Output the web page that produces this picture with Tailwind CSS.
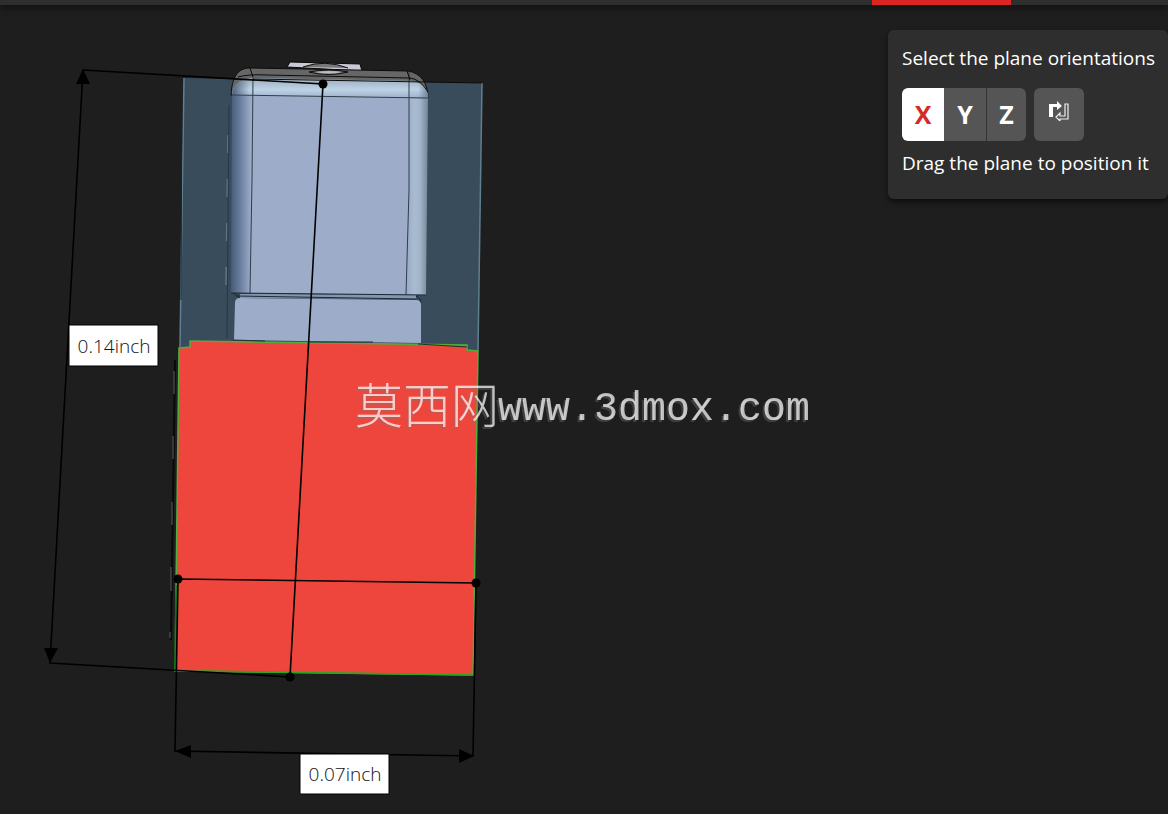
<!DOCTYPE html>
<html lang="en">

<head>
  <meta charset="UTF-8">
  <meta name="viewport" content="width=device-width, initial-scale=1.0">
  <title>Section view</title>
  <script src="https://cdn.jsdelivr.net/npm/@tailwindcss/browser@4"></script>
</head>

<body class="relative min-h-screen overflow-hidden bg-[#1e1e1e] font-['Open_Sans',sans-serif] text-white">
  <!-- 3D viewport -->
  <svg class="absolute inset-0 h-full w-full" viewBox="0 0 1168 814" preserveAspectRatio="xMinYMin meet" role="img" aria-label="Section view of the part">
    <defs>
      <linearGradient id="side" x1="0" x2="1" y1="0" y2="0">
        <stop offset="0" stop-color="#485b74" />
        <stop offset="0.04" stop-color="#64789a" />
        <stop offset="0.1" stop-color="#9aabc7" />
        <stop offset="0.11" stop-color="#9dadc9" />
        <stop offset="0.9" stop-color="#9dadc9" />
        <stop offset="0.93" stop-color="#a8bcd0" />
        <stop offset="0.96" stop-color="#a2b5c8" />
        <stop offset="1" stop-color="#71869a" />
      </linearGradient>
      <linearGradient id="fillet" x1="0" x2="0" y1="0" y2="1">
        <stop offset="0" stop-color="#9aacbd" />
        <stop offset="0.55" stop-color="#bdd3e5" />
        <stop offset="1" stop-color="#9dadc9" />
      </linearGradient>
      <linearGradient id="filletEdge" x1="0" x2="1" y1="0" y2="0">
        <stop offset="0" stop-color="#4c6078" />
        <stop offset="0.09" stop-color="#4c6078" stop-opacity="0" />
        <stop offset="0.95" stop-color="#71869a" stop-opacity="0" />
        <stop offset="1" stop-color="#71869a" />
      </linearGradient>
      <filter id="relief" x="-5%" y="-20%" width="110%" height="140%">
        <feDropShadow dx="-2" dy="2" stdDeviation="0" flood-color="#777" flood-opacity="0.5" />
      </filter>
    </defs>

    <!-- cutting plane -->
    <path fill="#394c5c" d="M184 78 482 83 478 352 180 348z" />
    <path fill="none" stroke="#607f90" stroke-width="1.5" d="M184 78 180 347M482 83 478 351" />
    <path fill="none" stroke="#182530" d="M182 80 181 300" />

    <!-- connector body -->
    <path fill="#c9c9d6" stroke="#080808" d="M287 67 290 62 360 64 362 71z" />
    <path fill="#666" stroke="#0c0c0c" d="M231 95C232 78 237 68 250 68L408 71C420 73 428 82 428 98z" />
    <path fill="#777" stroke="#0c0c0c" d="M303 67Q325 59 348 68M309 72Q328 68 348 72Q328 77 309 72" />
    <path fill="#bbb" d="M315 72Q330 70 342 72Q330 75 315 72" />
    <path fill="url(#side)" d="M232 94 428 97 426 295 231 293z" />
    <path fill="url(#fillet)" d="M232 95C233 84 240 80 252 78L412 81C424 83 428 89 428 99z" />
    <path fill="url(#filletEdge)" d="M232 95C233 84 240 80 252 78L412 81C424 83 428 89 428 99z" />
    <path fill="none" stroke="#303d4a" d="M232 95 428 98M253 77 252 180 250 293M409 72 409 190 406 295" />
    <path fill="none" stroke="#0c0c0c" d="M238 77Q248 74 267 75L410 78Q420 79 428 92M250 68 253 77M407 71 410 80M253 79 482 83" />
    <path fill="#8596b0" d="M240 294 416 295V299L240 298z" />
    <path fill="none" stroke="#1d2935" d="M231 293 426 295M236 296 416 299M233 293Q239 296 240 299M416 296Q421 298 421 303" />
    <path fill="none" stroke="#607785" stroke-width="1.5" stroke-dasharray="18 26" d="M228 135 226 285" />
    <path fill="none" stroke="#263747" d="M229 105 227 338" />
    <path fill="#9dadc9" d="M235 303Q235 298 240 298L416 300Q421 300 421 305V343L234 340z" />

    <!-- section cap -->
    <path fill="#ee463c" stroke="#4fae3e" stroke-width="1.5" d="M179 348 190 347V341L467 345V350L478 351 473 675 175 671z" />
    <path fill="none" stroke="#1d332b" d="M233 340 265 341M308 342 373 342M418 344 467 347" />
    <path fill="none" stroke="#090909" stroke-width="2" d="M175 360 171 640M177 585 175 671" />
    <path fill="none" stroke="#454545" stroke-width="1.5" d="M174 371V394M173 436V459M172 502V525M171 567V591M170 632V638" />
    <path fill="none" stroke="#178018" stroke-width="2" d="M177 585 175 671" />
    <path fill="none" stroke="#2fa020" stroke-width="1.5" d="M200 671 473 675" />

    <!-- dimensions -->
    <g fill="none" stroke="#000" stroke-width="1.6">
      <path d="M83 70 323 84 290 677 50 663z" />
      <path d="M178 579 476 583 473 756 175 751z" />
    </g>
    <path d="M83 69 90 84 76 84zM50 663 44 648 58 648zM175 751 191 745 191 758zM474 756 459 749 459 763z" />
    <circle cx="323" cy="84" r="4.5" />
    <circle cx="290" cy="677" r="4.5" />
    <circle cx="178" cy="579" r="4.5" />
    <circle cx="476" cy="583" r="4.5" />

    <g fill="#fff" stroke="#000">
      <path d="M69 325H158V366H69zM300 754H389V794H300z" />
    </g>
    <g class="text-[19px] font-light" fill="#111" text-anchor="middle">
      <text x="114" y="353">0.14inch</text>
      <text x="345" y="781">0.07inch</text>
    </g>

    <!-- watermark -->
    <g filter="url(#relief)" fill="#fff" fill-opacity="0.72">
      <text class="font-['Noto_Sans_CJK_SC',sans-serif] text-[48px] font-light" x="355" y="423">莫西网</text>
      <text class="font-['Liberation_Mono',monospace] text-[40px]" x="498" y="420">www.3dmox.com</text>
    </g>
  </svg>

  <header class="relative flex h-[5px] justify-end bg-[#2e2e2e] pr-[157px] shadow-md shadow-black/60">
    <div class="w-[139px] bg-[#dc2626]"></div>
  </header>

  <aside class="relative mt-[25px] ml-auto w-[280px] rounded-md bg-[#2e2e2e] px-[14px] pt-4 pb-6 shadow-md shadow-black/50">
    <p class="text-[19px] leading-6 whitespace-nowrap">Select the plane orientations</p>
    <div class="mt-[18px] mb-[10px] flex h-[53px] gap-2">
      <div class="flex overflow-hidden rounded-md text-[25px] font-bold" role="group" aria-label="Plane axis">
        <button type="button" aria-pressed="true" class="w-[42px] bg-white text-[#d52b27]">X</button>
        <button type="button" aria-pressed="false" class="w-[42px] bg-[#555]">Y</button>
        <button type="button" aria-pressed="false" class="w-10 border-l border-[#333] bg-[#555]">Z</button>
      </div>
      <button type="button" aria-label="Flip plane" class="flex w-[50px] items-center justify-center rounded-md bg-[#555] pb-2">
        <svg class="h-5 w-5" viewBox="0 0 20 20">
          <path fill="#fff" d="M0 16V3H8V0L13 5 8 9V6H4V16z" />
          <path fill="none" stroke="#eee" stroke-width="1.2" d="M16 3H19V18H11V20L7 16 11 12V15H16z" />
        </svg>
      </button>
    </div>
    <p class="text-[19px] leading-6 whitespace-nowrap">Drag the plane to position it</p>
  </aside>
</body>

</html>
